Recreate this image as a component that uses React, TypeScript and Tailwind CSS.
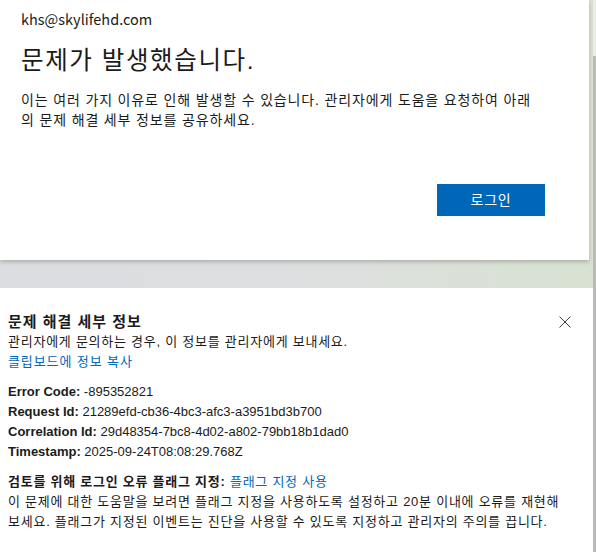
const font = "font-['Liberation_Sans','Noto_Sans_CJK_KR',sans-serif]";

function CloseIcon() {
  return (
    <svg width="12" height="12" viewBox="0 0 12 12" fill="none" stroke="#3b3b3b" strokeWidth="1">
      <path d="M0.5 0.5 11.5 11.5M11.5 0.5 0.5 11.5" />
    </svg>
  );
}

const details = [
  { label: "Error Code:", value: "-895352821" },
  { label: "Request Id:", value: "21289efd-cb36-4bc3-afc3-a3951bd3b700" },
  { label: "Correlation Id:", value: "29d48354-7bc8-4d02-a802-79bb18b1dad0" },
  { label: "Timestamp:", value: "2025-09-24T08:08:29.768Z" },
];

export default function App() {
  return (
    <div className={`${font} w-[596px] h-[552px] flex overflow-hidden text-[#1b1b1b]`}>
      <div className="w-[593px] flex flex-col bg-gradient-to-r from-[#dcdde0] via-[#dedfe0] to-[#d8e2d2]">
        {/* sign-in card */}
        <div className="w-[589px] bg-white shadow-[0_2px_4px_rgba(0,0,0,0.22)] pl-[21px] pr-[44px] pt-[9px] pb-[44px]">
          <div className="font-['Noto_Sans_CJK_KR',sans-serif] text-[14.5px] leading-[20px]">khs@skylifehd.com</div>
          <h1 className="mt-[16px] text-[24.5px] leading-[32px] font-normal tracking-[1.6px]">문제가 발생했습니다.</h1>
          <p className="mt-[13px] text-[14px] leading-[20px] tracking-[0.85px]">
            이는 여러 가지 이유로 인해 발생할 수 있습니다. 관리자에게 도움을 요청하여 아래 의 문제 해결 세부 정보를 공유하세요.
          </p>
          <div className="mt-[54px] flex justify-end">
            <button className="w-[108px] h-[32px] bg-[#0067b8] text-white text-[14px] tracking-[0.8px]">로그인</button>
          </div>
        </div>

        <div className="h-[28px]" />

        {/* troubleshooting details */}
        <div className="flex-1 bg-white pl-[8px] pr-[22px] pt-[24px] text-[13px] leading-[20px]">
          <div className="flex justify-between items-center">
            <h2 className="text-[15px] font-bold leading-[20px] tracking-[1px]">문제 해결 세부 정보</h2>
            <CloseIcon />
          </div>
          <div className="tracking-[0.75px]">관리자에게 문의하는 경우, 이 정보를 관리자에게 보내세요.</div>
          <div className="text-[#0067b8] tracking-[0.9px]">클립보드에 정보 복사</div>

          <div className="mt-[10px]">
            {details.map((d) => (
              <div key={d.label}>
                <span className="font-bold">{d.label}</span> {d.value}
              </div>
            ))}
          </div>

          <div className="mt-[10px] tracking-[0.75px]">
            <span className="font-bold">검토를 위해 로그인 오류 플래그 지정:</span>{" "}
            <span className="text-[#0067b8]">플래그 지정 사용</span>
          </div>
          <p className="tracking-[0.75px]">
            이 문제에 대한 도움말을 보려면 플래그 지정을 사용하도록 설정하고 20분 이내에 오류를 재현해 보세요. 플래그가 지정된 이벤트는 진단을 사용할 수 있도록 지정하고 관리자의 주의를 끕니다.
          </p>
        </div>
      </div>

      <div className="w-[3px] flex flex-col">
        <div className="h-[56px] bg-[#ebebeb]" />
        <div className="flex-1 bg-[#bababa]" />
      </div>
    </div>
  );
}
